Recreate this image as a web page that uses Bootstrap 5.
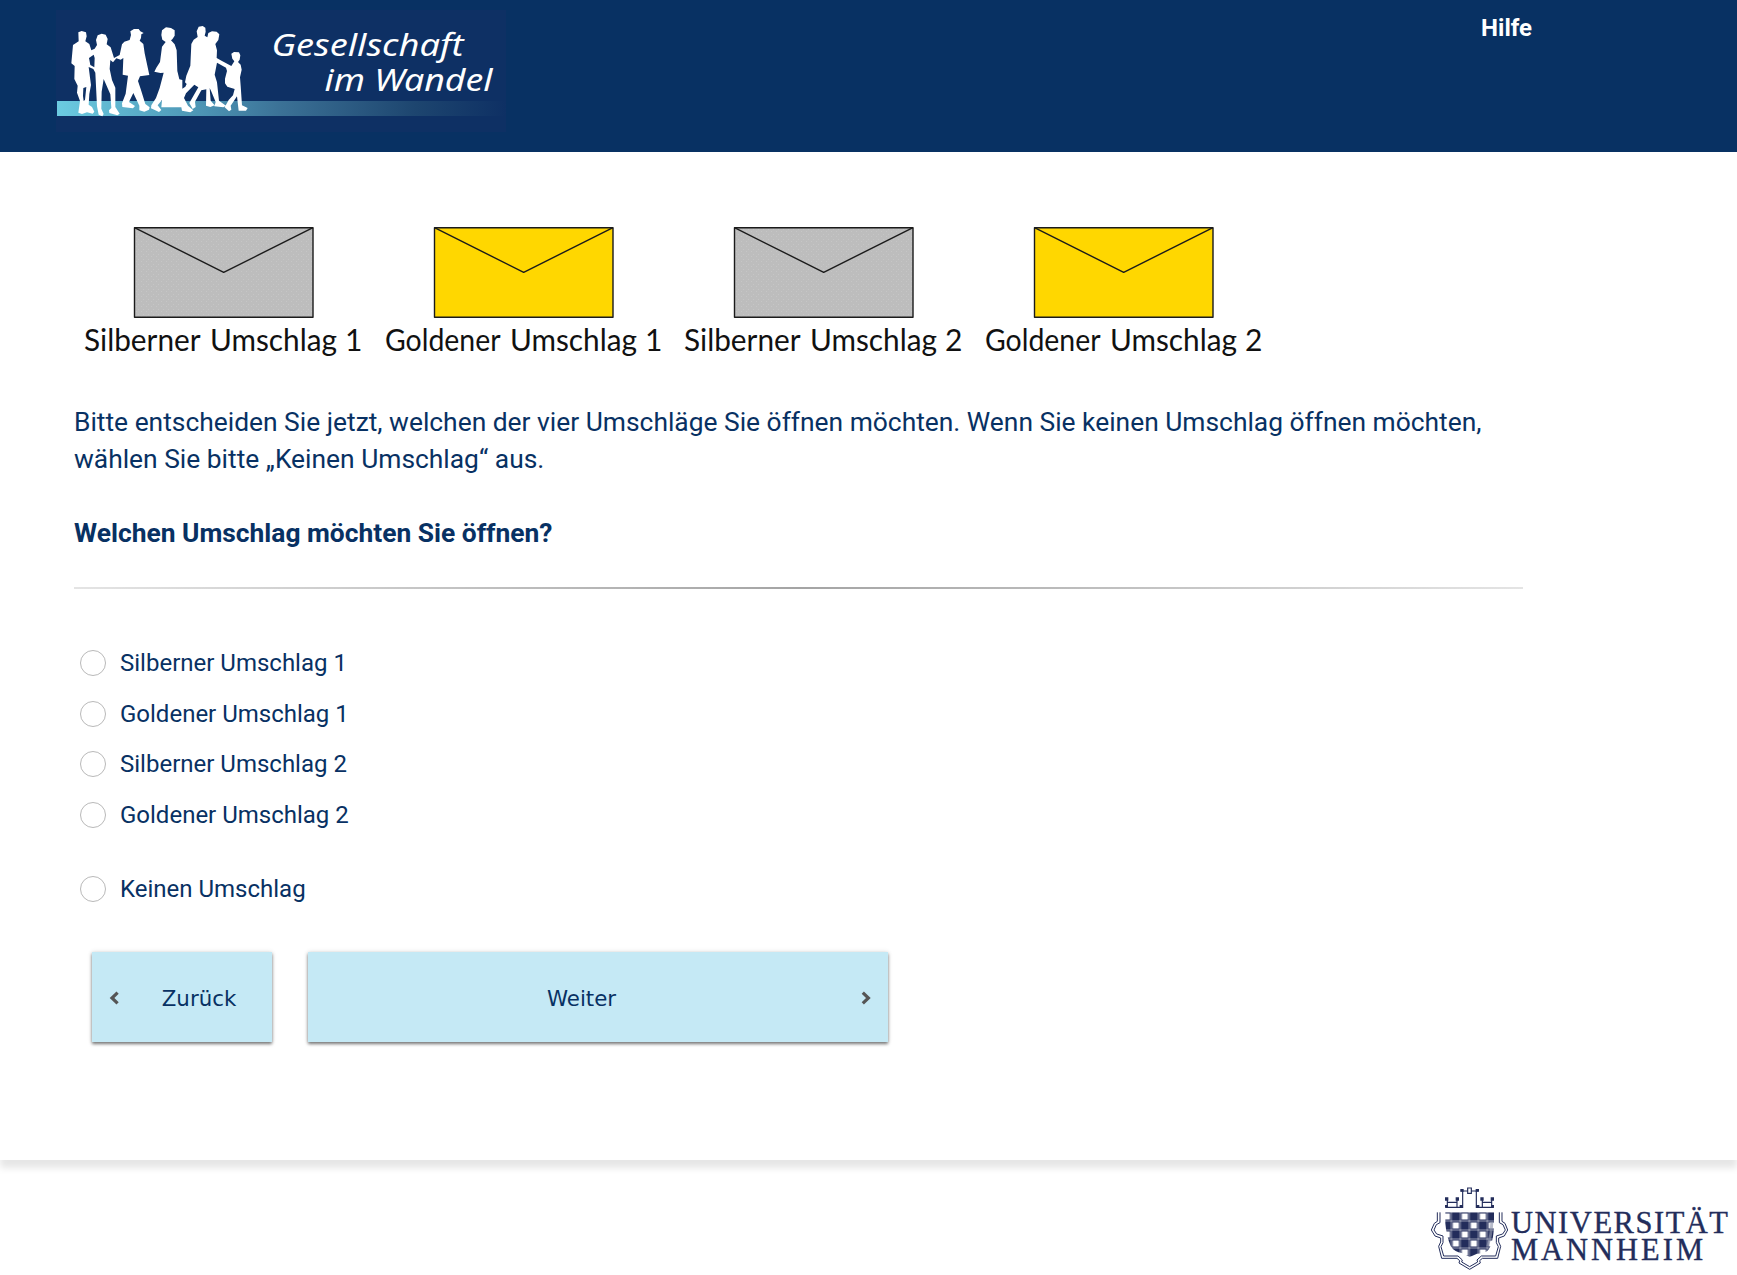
<!DOCTYPE html>
<html lang="de">
<head>
<meta charset="utf-8">
<meta name="viewport" content="width=device-width, initial-scale=1">
<title>Gesellschaft im Wandel</title>
<link href="https://cdn.jsdelivr.net/npm/bootstrap@5.3.0/dist/css/bootstrap.min.css" rel="stylesheet">
<style>
  body { font-family: Roboto, "Liberation Sans", sans-serif; color: #083163; background: #fff; overflow: hidden; }
  .site-head { height: 152px; background: #083163; padding: 10px 205px 0 56px; }
  .site-head svg { width: 450px; height: 122px; }
  .help-link { font-size: 24px; line-height: 36px; font-weight: 700; color: #fff; text-decoration: none; }
  .survey { height: 1008px; padding: 48px 214px 0 74px; box-shadow: 0 8px 7px rgba(0,0,0,.1); background: #fff; }
  .envelopes { width: 1200px; height: 180px; }
  .intro { font-size: 26.38px; line-height: 37px; margin-top: 24px; }
  .rule { height: 2px; margin-top: 35px; background: linear-gradient(90deg, #e4e4e4, #a4a4a4 50%, #e4e4e4); }
  .choices { margin: 57px 0 0 6px; }
  .form-check.choice { min-height: 0; height: 50.6px; margin: 0; padding: 0; gap: 14px; font-size: 24px; line-height: 34px; }
  .choice .form-check-input { float: none; margin: 4px 0 0; width: 26px; height: 26px; border: 1px solid #b9b9b9; flex: none; }
  .choice-last { margin-top: 24px !important; }
  .actions { gap: 36px; margin: 29.500px 0 0 18px; }
  .nav-btn { height: 90px; border: 0; background: #c5e9f5; color: #083163; font-family: "DejaVu Sans", sans-serif; font-size: 21.33px; box-shadow: 0 2px 3px rgba(0,0,0,.5), 0 0 5px rgba(0,0,0,.12); padding: 2px 17px 0; }
  .nav-btn:hover { background: #b5e0ef; }
  .nav-btn span { padding-top: 2px; }
  .nav-btn svg { width: 10px; height: 14px; flex: none; }
  .back { width: 180px; }
  .next { width: 580px; }
  .next span { padding-right: 23px; }
  .site-foot { padding: 24px 8px 0 0; }
  .site-foot svg { width: 300px; height: 90px; }
</style>
</head>
<body>
<header class="site-head d-flex justify-content-between align-items-start">
  <svg viewBox="56 10 450 122" role="img" aria-label="Gesellschaft im Wandel">
    <defs>
      <linearGradient id="bar"><stop offset="0" stop-color="#6bcbe1"/><stop offset=".33" stop-color="#4c93b3"/><stop offset=".5" stop-color="#3b7196"/><stop offset=".8" stop-color="#1d456f"/><stop offset="1" stop-color="#0e3064"/></linearGradient>
    </defs>
    <rect x="56" y="10" width="450" height="122" fill="#0e3064"/>
    <rect x="57" y="101" width="449" height="15" fill="url(#bar)"/>
    <g transform="translate(40 0) scale(.33333)" fill="#fff">
      <path d="M115 97L125 93L138 97L140 109L136 124L148 132L154 151L164 146L171 135L168 120L173 106L185 101L197 104L203 117L200 133L212 142L222 174L239 165L246 133L253 125L269 120L273 105L271 94L282 87L296 87L301 94L311 99L304 103L303 114L299 122L310 132L314 160L328 225L300 229L294 243L303 270L316 312L329 322L327 329L313 335L298 331L298 317L280 279L267 306L285 318L279 325L247 321L246 310L257 281L264 227L248 224L250 174L242 179L229 175L219 187L211 180L209 207L216 240L226 263L226 321L239 341L232 346L208 339L207 331L214 324L211 283L191 237L185 275L184 326L191 342L187 349L176 344L171 319L166 218L160 207L146 201L151 240L153 255L148 282L146 314L156 321L163 335L158 341L141 337L126 342L115 338L120 303L111 278L113 257L103 237L104 198L94 190L99 135L116 124Z"/>
      <path fill="#0e3064" d="M147 174L161 164L164 174L163 202L151 195ZM130 264L139 261L135 300L131 303L129 288Z"/>
      <path d="M366 91L378 82L393 84L404 91L404 107L397 118L393 121L404 133L410 151L412 213L418 238L427 240L427 266L436 260L440 252L435 247L439 227L451 197L454 132L461 119L473 111L470 94L476 80L488 78L496 83L497 95L494 107L502 112L505 99L516 94L530 95L538 103L535 120L526 132L531 151L530 174L546 183L574 198L583 184L577 176L574 161L582 156L597 157L601 166L599 179L594 186L602 194L605 209L600 232L602 257L606 316L623 324L618 332L596 332L591 289L572 317L574 329L567 334L554 322L566 300L579 286L584 267L562 260L555 250L555 236L561 213L558 203L531 188L524 224L531 247L537 302L558 317L550 322L523 319L527 306L513 272L509 264L512 302L524 316L511 321L498 317L499 268L484 271L465 305L467 321L458 327L448 309L475 262L463 254L438 280L432 294L444 317L460 331L451 337L426 332L424 322H364L366 300L353 316L364 330L357 336L333 325L334 316L348 294L359 264L371 218L361 219L343 215L349 203L360 186L366 140L377 126L367 119L364 105Z"/>
    </g>
    <g fill="#fff" font-family="Noto Sans, Open Sans, sans-serif" font-style="italic" font-size="31">
      <text x="271.500" y="56" textLength="192" lengthAdjust="spacingAndGlyphs">Gesellschaft</text>
      <text x="324.500" y="90.5" textLength="168" lengthAdjust="spacingAndGlyphs">im Wandel</text>
    </g>
  </svg>
  <a class="help-link" href="#">Hilfe</a>
</header>

<main class="survey">
  <svg class="envelopes d-block" viewBox="74 200 1200 180">
    <defs>
      <pattern id="grain" width="5" height="5" patternUnits="userSpaceOnUse"><rect width="5" height="5" fill="#bdbdbd"/><path d="M1 1h1v1H1zM3 4h1v1H3z" fill="#c6c6c6"/></pattern>
    </defs>
    <g stroke="#1b1b1b" stroke-width="1.4" stroke-linejoin="round">
      <path fill="url(#grain)" d="M134.5 227.7h178.5v89.6h-178.5zM734.5 227.7h178.5v89.6h-178.5z"/>
      <path fill="#ffd700" d="M434.5 227.7h178.5v89.6h-178.5zM1034.5 227.7h178.5v89.6h-178.5z"/>
      <path fill="none" d="M134.5 227.7L223.7 272.3L313 227.7M434.5 227.7L523.7 272.3L613 227.7M734.5 227.7L823.7 272.3L913 227.7M1034.5 227.7L1123.7 272.3L1213 227.7"/>
    </g>
    <g fill="#111" font-family="Lato, sans-serif" font-size="30">
      <text y="350.700"><tspan x="84" textLength="116" lengthAdjust="spacingAndGlyphs">Silberner</tspan> <tspan x="210" textLength="127" lengthAdjust="spacingAndGlyphs">Umschlag</tspan> <tspan x="345">1</tspan></text>
      <text y="350.700"><tspan x="385" textLength="115" lengthAdjust="spacingAndGlyphs">Goldener</tspan> <tspan x="510" textLength="127" lengthAdjust="spacingAndGlyphs">Umschlag</tspan> <tspan x="645">1</tspan></text>
      <text y="350.700"><tspan x="684" textLength="116" lengthAdjust="spacingAndGlyphs">Silberner</tspan> <tspan x="810" textLength="127" lengthAdjust="spacingAndGlyphs">Umschlag</tspan> <tspan x="945">2</tspan></text>
      <text y="350.700"><tspan x="985" textLength="115" lengthAdjust="spacingAndGlyphs">Goldener</tspan> <tspan x="1110" textLength="127" lengthAdjust="spacingAndGlyphs">Umschlag</tspan> <tspan x="1245">2</tspan></text>
    </g>
  </svg>

  <div class="intro">
    Bitte entscheiden Sie jetzt, welchen der vier Umschläge Sie öffnen möchten. Wenn Sie keinen Umschlag öffnen möchten,<br>wählen Sie bitte „Keinen Umschlag“ aus.<br><br><strong>Welchen Umschlag möchten Sie öffnen?</strong>
  </div>
  <div class="rule"></div>

  <form>
    <div class="choices">
      <div class="form-check choice d-flex align-items-start"><input class="form-check-input" type="radio" name="u" id="c1"><label for="c1">Silberner Umschlag 1</label></div>
      <div class="form-check choice d-flex align-items-start"><input class="form-check-input" type="radio" name="u" id="c2"><label for="c2">Goldener Umschlag 1</label></div>
      <div class="form-check choice d-flex align-items-start"><input class="form-check-input" type="radio" name="u" id="c3"><label for="c3">Silberner Umschlag 2</label></div>
      <div class="form-check choice d-flex align-items-start"><input class="form-check-input" type="radio" name="u" id="c4"><label for="c4">Goldener Umschlag 2</label></div>
      <div class="form-check choice choice-last d-flex align-items-start"><input class="form-check-input" type="radio" name="u" id="c5"><label for="c5">Keinen Umschlag</label></div>
    </div>
    <div class="actions d-flex">
      <button type="button" class="btn nav-btn back rounded-0 d-flex align-items-center">
        <svg viewBox="0 0 10 14"><path d="M8.6 1.600L3 7l5.600 5.400" fill="none" stroke="#555" stroke-width="3.200"/></svg>
        <span class="flex-fill text-center ps-4">Zurück</span>
      </button>
      <button type="button" class="btn nav-btn next rounded-0 d-flex align-items-center">
        <span class="flex-fill text-center">Weiter</span>
        <svg viewBox="0 0 10 14"><path d="M1.800 1.600L7.400 7l-5.600 5.400" fill="none" stroke="#555" stroke-width="3.200"/></svg>
      </button>
    </div>
  </form>
</main>

<footer class="site-foot d-flex justify-content-end">
  <svg viewBox="1429 1184 300 90" role="img" aria-label="Universität Mannheim">
    <defs>
      <pattern id="check" x="94" y="186" width="54" height="54" patternUnits="userSpaceOnUse">
        <rect width="54" height="54" fill="#fff"/>
        <path fill="#232d5b" d="M.8.8h25.400v25.400H.8zM27.800 27.800h25.400v25.400H27.800z"/>
        <path fill="none" stroke="#232d5b" stroke-width="3.500" d="M29.500 2.500h22v22h-22zM2.500 29.500h22v22h-22z"/>
      </pattern>
    </defs>
    <g transform="translate(1420 1150) scale(.33333)">
      <path fill="url(#check)" d="M76 187H222V226Q220 284 203 302Q191 310 171 311L149 321L128 310Q101 305 92 288Q79 258 76 220Z"/>
      <path fill="#9096ad" d="M211 215h9q-2 46-14 74h-7q11-34 12-74z" opacity=".65"/>
      <g fill="none" stroke="#232d5b" stroke-width="3.500">
        <path d="M82 150V170M111 150V170M82 157H111M187 150V170M215 150V170M187 157H215M77 172H128V122M122 123H143M143 114H154V130H143ZM154 123H175M169 122V172H221"/>
      </g>
      <path fill="#232d5b" d="M75 142h10v10H75zM107 142h10v10h-10zM181 142h10v10h-10zM212 142h10v10h-10zM121 117h10v8h-10zM167 117h10v8h-10zM119 165h10v8h-10zM168 165h10v8h-10zM75 165h8v8h-8zM214 165h8v8h-8z"/>
      <g fill="none" stroke="#232d5b" stroke-width="3">
        <path d="M52 187V214L43 220L34 240L45 258L62 264V276L56 289L65 325H111L119 332L117 339L149 358L181 339L179 332L187 325H233L242 289L236 276V264L253 258L263 240L255 220L246 214V187"/>
        <path d="M60 187V218L49 224L42 240L50 252L69 258V278L63 290L71 318H114L127 330L125 336L149 350L173 336L171 330L184 318H227L235 290L229 278V258L248 252L256 240L249 224L238 218V187"/>
      </g>
    </g>
    <g fill="#232d5b" stroke="#232d5b" stroke-width=".35" font-family="Liberation Serif, serif" font-size="30.500">
      <text x="1511" y="1233" textLength="217">UNIVERSITÄT</text>
      <text x="1511" y="1259.500" textLength="192">MANNHEIM</text>
    </g>
  </svg>
</footer>
<script src="https://cdn.jsdelivr.net/npm/bootstrap@5.3.0/dist/js/bootstrap.bundle.min.js"></script>
</body>
</html>
